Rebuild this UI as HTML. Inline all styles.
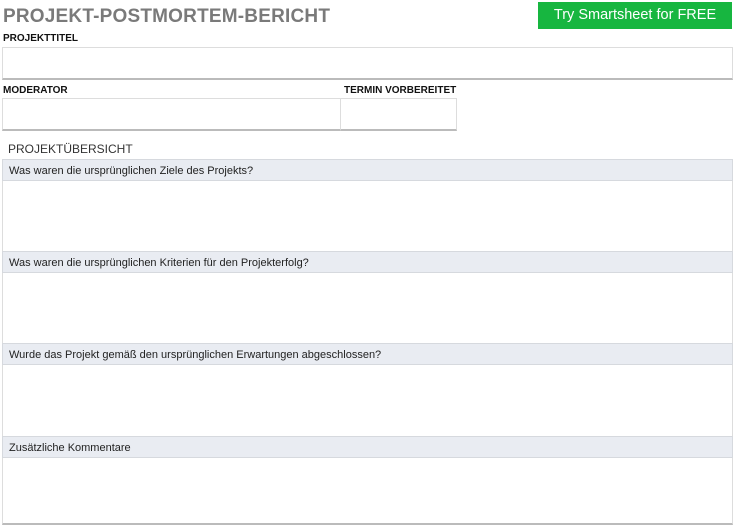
<!DOCTYPE html>
<html><head><meta charset="utf-8"><style>
*{box-sizing:border-box;margin:0;padding:0}
body{width:735px;height:529px;background:#fff;font-family:"Liberation Sans",sans-serif;position:relative;overflow:hidden;color:#222}
.a{position:absolute}
.title{left:3px;top:6px;font-size:19px;font-weight:bold;color:#7a7a7a;letter-spacing:0.2px}
.btn{left:538px;top:2px;width:194px;height:27px;background:#17b640;color:#fff;font-size:14.5px;text-align:center;line-height:27px}
.lbl{font-size:10px;font-weight:bold;color:#111}
.box{border:1px solid #ddd;border-bottom:2px solid #bbb;background:#fff}
.hdr{left:2px;width:731px;height:22px;background:#e9ecf2;border:1px solid #d6d9de;font-size:11px;line-height:22px;padding-left:6px;color:#222}
.body{left:2px;width:731px;border-left:1px solid #ddd;border-right:1px solid #ddd}
</style></head><body>
<div class="a title">PROJEKT-POSTMORTEM-BERICHT</div>
<div class="a btn">Try Smartsheet for FREE</div>
<div class="a lbl" style="left:3px;top:33px">PROJEKTTITEL</div>
<div class="a box" style="left:2px;top:47px;width:731px;height:33px"></div>
<div class="a lbl" style="left:3px;top:85px">MODERATOR</div>
<div class="a lbl" style="left:344px;top:85px">TERMIN VORBEREITET</div>
<div class="a box" style="left:2px;top:98px;width:339px;height:33px"></div>
<div class="a box" style="left:340px;top:98px;width:117px;height:33px"></div>
<div class="a" style="left:8px;top:142px;font-size:12px;color:#333">PROJEKTÜBERSICHT</div>

<div class="a hdr" style="top:159px">Was waren die ursprünglichen Ziele des Projekts?</div>
<div class="a body" style="top:181px;height:70px"></div>
<div class="a hdr" style="top:251px">Was waren die ursprünglichen Kriterien für den Projekterfolg?</div>
<div class="a body" style="top:273px;height:70px"></div>
<div class="a hdr" style="top:343px">Wurde das Projekt gemäß den ursprünglichen Erwartungen abgeschlossen?</div>
<div class="a body" style="top:365px;height:71px"></div>
<div class="a hdr" style="top:436px">Zusätzliche Kommentare</div>
<div class="a body" style="top:458px;height:67px;border-bottom:2px solid #bbb"></div>
</body></html>
